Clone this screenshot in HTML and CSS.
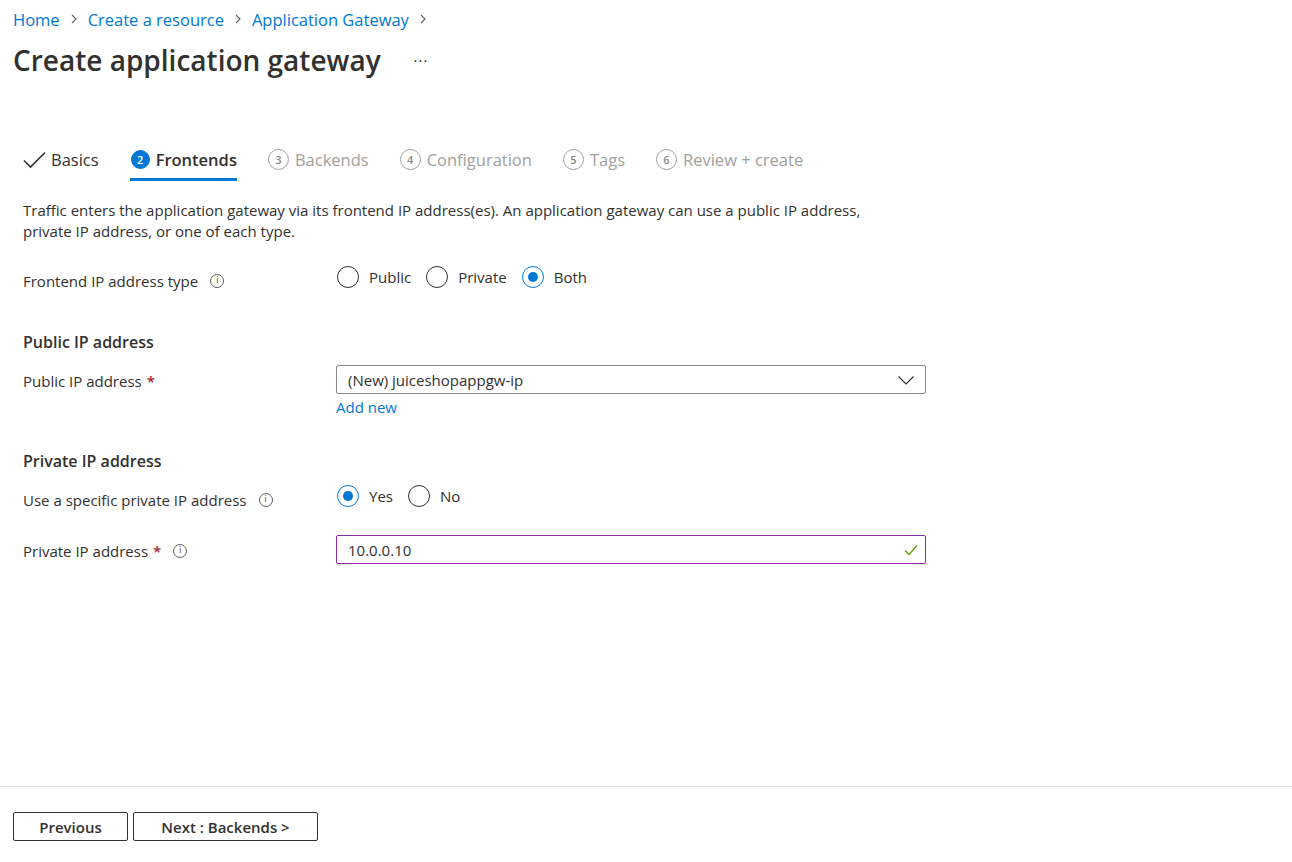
FILE: index.html
```html
<!DOCTYPE html>
<html lang="en">
<head>
<meta charset="utf-8">
<title>Create application gateway</title>
<link rel="stylesheet" href="styles.css">
</head>
<body>
<div class="page">
  <nav class="breadcrumb">
    <a href="#">Home</a>
    <svg class="bc-sep" width="12" height="12" viewBox="0 0 12 12"><path d="M4 2l4 4-4 4" fill="none" stroke="#605e5c" stroke-width="1.1"/></svg>
    <a href="#">Create a resource</a>
    <svg class="bc-sep" width="12" height="12" viewBox="0 0 12 12"><path d="M4 2l4 4-4 4" fill="none" stroke="#605e5c" stroke-width="1.1"/></svg>
    <a href="#">Application Gateway</a>
    <svg class="bc-sep" width="12" height="12" viewBox="0 0 12 12"><path d="M4 2l4 4-4 4" fill="none" stroke="#605e5c" stroke-width="1.1"/></svg>
  </nav>
  <div class="title-row">
    <h1 class="title">Create application gateway</h1>
    <span class="more">···</span>
  </div>

  <div class="tabs">
    <div class="tab done">
      <svg width="23" height="20" viewBox="0 0 23 20"><path d="M1 10.5l6.5 6.5L22 2.5" fill="none" stroke="#323130" stroke-width="1.6"/></svg>
      <span>Basics</span>
    </div>
    <div class="tab active">
      <span class="step">2</span>
      <span>Frontends</span>
    </div>
    <div class="tab">
      <span class="step">3</span>
      <span>Backends</span>
    </div>
    <div class="tab">
      <span class="step">4</span>
      <span>Configuration</span>
    </div>
    <div class="tab">
      <span class="step">5</span>
      <span>Tags</span>
    </div>
    <div class="tab">
      <span class="step">6</span>
      <span>Review + create</span>
    </div>
  </div>

  <div class="content">
    <p class="desc">Traffic enters the application gateway via its frontend IP address(es). An application gateway can use a public IP address, private IP address, or one of each type.</p>

    <div class="row row-radio">
      <div class="label">Frontend IP address type <span class="info">i</span></div>
      <div class="control radios">
        <label class="radio"><span class="circle"></span>Public</label>
        <label class="radio"><span class="circle"></span>Private</label>
        <label class="radio"><span class="circle on"></span>Both</label>
      </div>
    </div>

    <h2 class="section">Public IP address</h2>
    <div class="row row-input">
      <div class="label">Public IP address <span class="req">*</span></div>
      <div class="control">
        <div class="field select">
          <span>(New) juiceshopappgw-ip</span>
          <svg width="18" height="12" viewBox="0 0 18 12"><path d="M1.5 2.5l7.5 7.5 7.5-7.5" fill="none" stroke="#323130" stroke-width="1.2"/></svg>
        </div>
        <a class="addnew" href="#">Add new</a>
      </div>
    </div>

    <h2 class="section section2">Private IP address</h2>
    <div class="row row-radio2">
      <div class="label">Use a specific private IP address <span class="info">i</span></div>
      <div class="control radios">
        <label class="radio"><span class="circle on"></span>Yes</label>
        <label class="radio"><span class="circle"></span>No</label>
      </div>
    </div>

    <div class="row row-input2">
      <div class="label">Private IP address <span class="req">*</span> <span class="info">i</span></div>
      <div class="control">
        <div class="field valid">
          <span>10.0.0.10</span>
          <svg width="14" height="12" viewBox="0 0 14 12"><path d="M1 6.5l4 4L13 1.5" fill="none" stroke="#57a300" stroke-width="1.3"/></svg>
        </div>
      </div>
    </div>
  </div>
</div>

<footer class="footer">
  <button class="btn btn-prev">Previous</button>
  <button class="btn btn-next">Next : Backends &gt;</button>
</footer>
</body>
</html>
```

FILE: styles.css
```css
* { box-sizing: border-box; }
html, body {
  margin: 0;
  padding: 0;
  height: 100%;
}
body {
  font-family: "Open Sans", "Noto Sans", sans-serif;
  color: #323130;
  background: #ffffff;
  width: 1292px;
  height: 862px;
  position: relative;
  overflow: hidden;
}
.page {
  padding: 0 0 0 13px;
}
.breadcrumb {
  display: flex;
  align-items: center;
  height: 20px;
  margin-top: 9px;
  font-size: 16.5px;
}
.breadcrumb a {
  color: #0078d4;
  text-decoration: none;
}
.bc-sep {
  margin: 0 8px 0 8px;
}
.title-row {
  display: flex;
  align-items: center;
  height: 40px;
  margin-top: 11px;
}
.title {
  font-size: 28px;
  font-weight: 600;
  margin: 0;
  line-height: 40px;
}
.more {
  margin-left: 33px;
  font-size: 15px;
  color: #323130;
  letter-spacing: 1px;
}

.tabs {
  display: flex;
  margin-top: 61px;
  margin-left: 10px;
  gap: 31px;
  height: 42px;
}
.tab {
  display: flex;
  align-items: center;
  height: 40px;
  font-size: 16.5px;
  color: #a19f9d;
  gap: 6px;
  border-bottom: 3px solid transparent;
}
.tab.active {
  color: #323130;
  font-weight: 600;
  border-bottom-color: #0078d4;
}
.tab.done { color: #323130; gap: 5px; }
.step {
  width: 21px;
  height: 21px;
  border-radius: 50%;
  border: 1px solid #a19f9d;
  font-size: 11px;
  display: inline-flex;
  align-items: center;
  justify-content: center;
  color: #8a8886;
  font-weight: 600;
}
.tab.active .step {
  background: #0078d4;
  border-color: #0078d4;
  color: #ffffff;
  width: 19px;
  height: 19px;
  margin-left: 1px;
}

.content {
  padding-left: 10px;
  width: 912px;
}
.desc {
  font-size: 15px;
  line-height: 21px;
  margin: 17px 0 0 0;
  width: 880px;
}
.row {
  display: flex;
}
.label {
  width: 313px;
  flex: none;
  font-size: 15px;
  display: flex;
  align-items: center;
  height: 21px;
}
.control {
  flex: 1;
}
.info {
  display: inline-flex;
  align-items: center;
  justify-content: center;
  width: 14px;
  height: 14px;
  border-radius: 50%;
  border: 1px solid #605e5c;
  font-size: 9px;
  line-height: 1;
  color: #605e5c;
  margin-left: 12px;
  font-family: "DejaVu Sans", sans-serif;
}
.req {
  color: #a4262c;
  margin-left: 5px;
  font-weight: 600;
}
.req + .info { margin-left: 12px; }

.radios {
  display: flex;
  align-items: center;
  gap: 15px;
  height: 22px;
}
.radio {
  display: flex;
  align-items: center;
  font-size: 15px;
  gap: 10px;
}
.circle {
  width: 22px;
  height: 22px;
  border-radius: 50%;
  border: 1px solid #323130;
  display: inline-block;
  position: relative;
}
.circle.on {
  border-color: #0078d4;
}
.circle.on::after {
  content: "";
  position: absolute;
  left: 5px;
  top: 5px;
  width: 10px;
  height: 10px;
  border-radius: 50%;
  background: #0078d4;
}

.row-radio {
  margin-top: 24px;
}
.row-radio .label { margin-top: 4px; }
.row-radio .control { margin-left: 1px; }

.section {
  font-size: 16px;
  font-weight: 600;
  margin: 0;
  line-height: 22px;
}
.row-radio + .section { margin-top: 40px; }

.row-input { margin-top: 12px; }
.row-input .label { margin-top: 5px; }

.field {
  height: 29px;
  width: 590px;
  border: 1px solid #8a8886;
  border-radius: 2px;
  display: flex;
  align-items: center;
  justify-content: space-between;
  padding: 0 10px 0 11px;
  font-size: 15px;
}
.field.valid {
  border-color: #8a2da5;
  padding-right: 7px;
}
.addnew {
  display: block;
  color: #0078d4;
  text-decoration: none;
  font-size: 15px;
  line-height: 21px;
  margin-top: 3px;
}
.section2 { margin-top: 32px; }

.row-radio2 { margin-top: 13px; }
.row-radio2 .label { margin-top: 4px; }
.row-radio2 .control { margin-left: 1px; }

.row-input2 { margin-top: 25px; }
.row-input2 .label { margin-top: 5px; }

.footer {
  position: absolute;
  left: 0;
  right: 0;
  top: 786px;
  height: 76px;
  border-top: 1px solid #e1dfdd;
  padding: 25px 0 0 13px;
  display: flex;
  gap: 5px;
  align-items: flex-start;
}
.btn {
  height: 29px;
  border: 1px solid #323130;
  border-radius: 2px;
  background: #ffffff;
  font-family: "Open Sans", "Noto Sans", sans-serif;
  font-size: 15px;
  font-weight: 600;
  color: #323130;
  padding: 0;
}
.btn-prev { width: 115px; }
.btn-next { width: 185px; }
```
